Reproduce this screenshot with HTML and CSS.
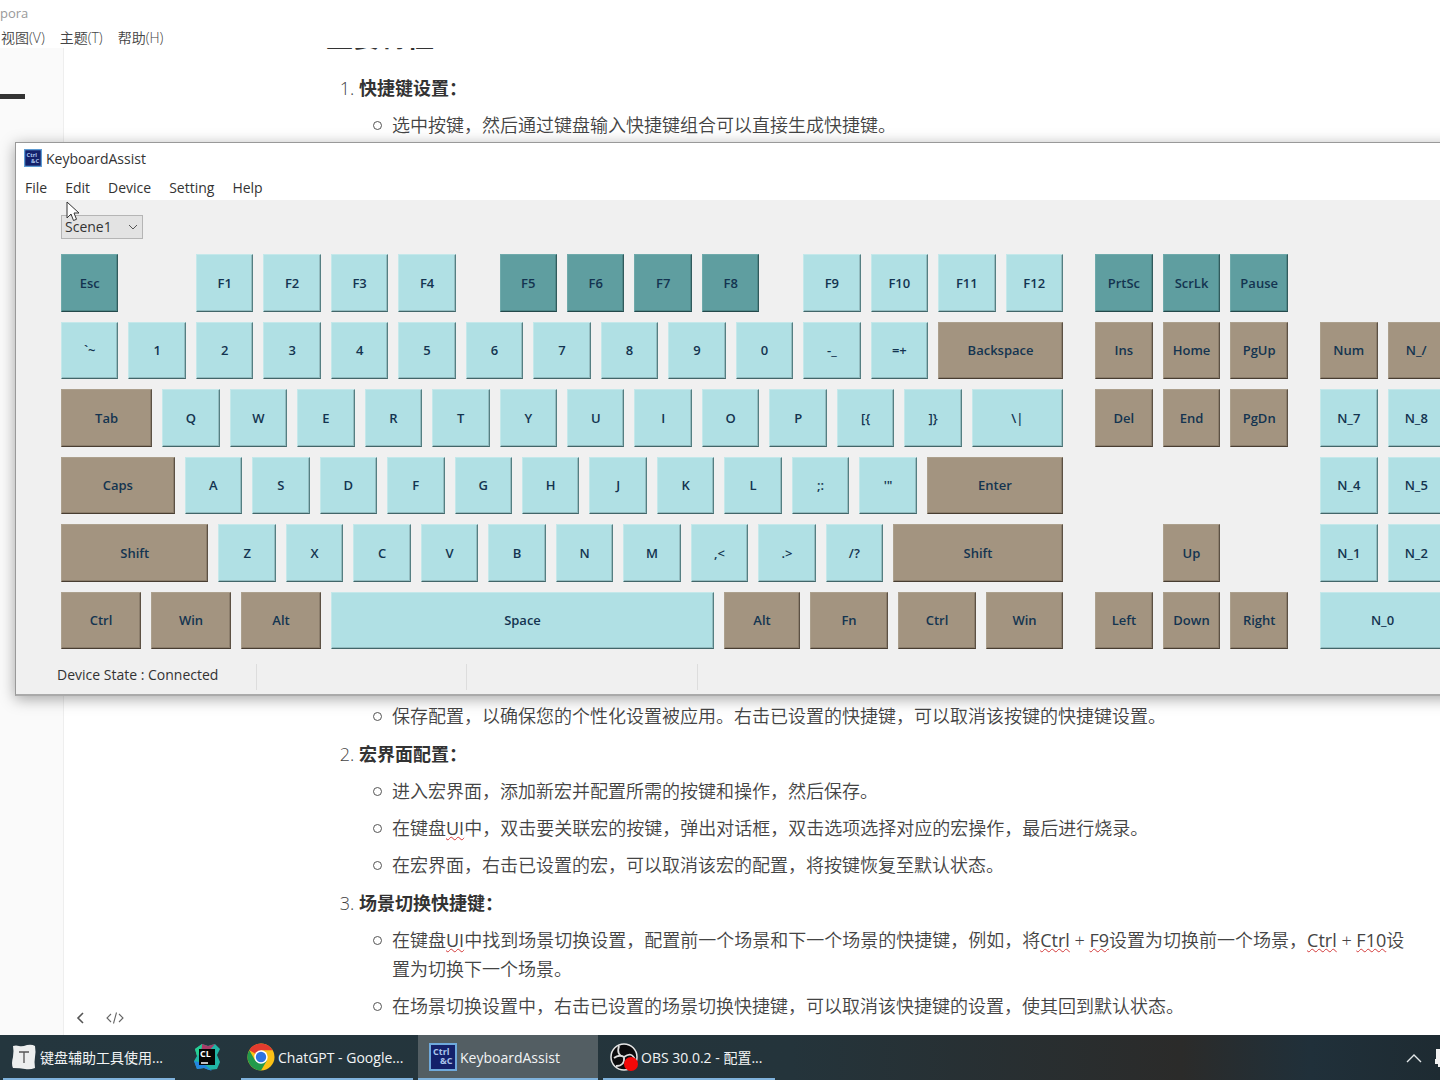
FILE: index.html
```html
<!DOCTYPE html>
<html lang="zh-CN">
<head>
<meta charset="utf-8">
<title>KeyboardAssist</title>
<link rel="stylesheet" href="styles.css">
</head>
<body>
<div class="desktop">
  <header class="editor-head">
    <div class="editor-title">pora</div>
    <nav class="editor-menu">
      <button type="button">视图(V)</button>
      <button type="button">主题(T)</button>
      <button type="button">帮助(H)</button>
    </nav>
  </header>
  <div class="editor-body">
    <aside class="sidebar"><div class="sidebar-tab"></div></aside>
    <main class="doc">
      <h2>重要特性</h2>
      <ol class="sections">
        <li><strong>快捷键设置：</strong>
          <ul>
            <li>选中按键，然后通过键盘输入快捷键组合可以直接生成快捷键。</li>
            <li class="after-window">保存配置，以确保您的个性化设置被应用。右击已设置的快捷键，可以取消该按键的快捷键设置。</li>
          </ul>
        </li>
        <li><strong>宏界面配置：</strong>
          <ul>
            <li>进入宏界面，添加新宏并配置所需的按键和操作，然后保存。</li>
            <li>在键盘<span class="typo">UI</span>中，双击要关联宏的按键，弹出对话框，双击选项选择对应的宏操作，最后进行烧录。</li>
            <li>在宏界面，右击已设置的宏，可以取消该宏的配置，将按键恢复至默认状态。</li>
          </ul>
        </li>
        <li><strong>场景切换快捷键：</strong>
          <ul>
            <li>在键盘<span class="typo">UI</span>中找到场景切换设置，配置前一个场景和下一个场景的快捷键，例如，将<span class="typo">Ctrl</span> + <span class="typo">F9</span>设置为切换前一个场景，<span class="typo">Ctrl</span> + <span class="typo">F10</span>设置为切换下一个场景。</li>
            <li>在场景切换设置中，右击已设置的场景切换快捷键，可以取消该快捷键的设置，使其回到默认状态。</li>
          </ul>
        </li>
      </ol>
    </main>
    <div class="doc-tools">
      <button type="button" aria-label="Back"><svg width="10" height="14" viewBox="0 0 10 14"><path d="M8 2 3 7l5 5" fill="none" stroke="#555" stroke-width="1.6"/></svg></button>
      <button type="button" aria-label="Source"><svg width="18" height="14" viewBox="0 0 18 14"><path d="M5 3 1 7l4 4M13 3l4 4-4 4M10.500 1.500l-3 11" fill="none" stroke="#666" stroke-width="1.100"/></svg></button>
    </div>
  </div>

  <section class="window">
    <div class="window-title">
      <svg width="18" height="18" viewBox="0 0 28 28"><rect x="1" y="1" width="26" height="26" fill="#14216b" stroke="#5d9bd3" stroke-width="2"/><text x="4" y="12" class="logo-text">Ctrl</text><text x="11" y="22" class="logo-text">&amp;C</text></svg>
      <span>KeyboardAssist</span>
    </div>
    <nav class="window-menu">
      <button type="button">File</button>
      <button type="button">Edit</button>
      <button type="button">Device</button>
      <button type="button">Setting</button>
      <button type="button">Help</button>
    </nav>
    <div class="window-body">
      <div class="scene">
        <select aria-label="Scene"><option>Scene1</option></select>
        <svg class="scene-arrow" width="10" height="6" viewBox="0 0 10 6"><path d="M1 1l4 4 4-4" fill="none" stroke="#555"/></svg>
      </div>
      <div class="keyboard">
        <div class="block main-block">
          <div class="row row-fn">
            <button class="key teal">Esc</button><i></i>
            <button class="key">F1</button><button class="key">F2</button><button class="key">F3</button><button class="key">F4</button><i></i>
            <button class="key teal">F5</button><button class="key teal">F6</button><button class="key teal">F7</button><button class="key teal">F8</button><i></i>
            <button class="key">F9</button><button class="key">F10</button><button class="key">F11</button><button class="key">F12</button>
          </div>
          <div class="row row-num">
            <button class="key">`~</button><button class="key">1</button><button class="key">2</button><button class="key">3</button><button class="key">4</button><button class="key">5</button><button class="key">6</button><button class="key">7</button><button class="key">8</button><button class="key">9</button><button class="key">0</button><button class="key">-_</button><button class="key">=+</button><button class="key brown">Backspace</button>
          </div>
          <div class="row row-q">
            <button class="key brown">Tab</button><button class="key">Q</button><button class="key">W</button><button class="key">E</button><button class="key">R</button><button class="key">T</button><button class="key">Y</button><button class="key">U</button><button class="key">I</button><button class="key">O</button><button class="key">P</button><button class="key">[{</button><button class="key">]}</button><button class="key">\|</button>
          </div>
          <div class="row row-a">
            <button class="key brown">Caps</button><button class="key">A</button><button class="key">S</button><button class="key">D</button><button class="key">F</button><button class="key">G</button><button class="key">H</button><button class="key">J</button><button class="key">K</button><button class="key">L</button><button class="key">;:</button><button class="key">'"</button><button class="key brown">Enter</button>
          </div>
          <div class="row row-z">
            <button class="key brown">Shift</button><button class="key">Z</button><button class="key">X</button><button class="key">C</button><button class="key">V</button><button class="key">B</button><button class="key">N</button><button class="key">M</button><button class="key">,&lt;</button><button class="key">.&gt;</button><button class="key">/?</button><button class="key brown">Shift</button>
          </div>
          <div class="row row-space">
            <button class="key brown">Ctrl</button><button class="key brown">Win</button><button class="key brown">Alt</button><button class="key">Space</button><button class="key brown">Alt</button><button class="key brown">Fn</button><button class="key brown">Ctrl</button><button class="key brown">Win</button>
          </div>
        </div>
        <div class="block nav-block">
          <div class="row"><button class="key teal">PrtSc</button><button class="key teal">ScrLk</button><button class="key teal">Pause</button></div>
          <div class="row"><button class="key brown">Ins</button><button class="key brown">Home</button><button class="key brown">PgUp</button></div>
          <div class="row"><button class="key brown">Del</button><button class="key brown">End</button><button class="key brown">PgDn</button></div>
          <div class="row"></div>
          <div class="row"><i></i><button class="key brown">Up</button></div>
          <div class="row"><button class="key brown">Left</button><button class="key brown">Down</button><button class="key brown">Right</button></div>
        </div>
        <div class="block pad-block">
          <div class="row"></div>
          <div class="row"><button class="key brown">Num</button><button class="key brown">N_/</button></div>
          <div class="row"><button class="key">N_7</button><button class="key">N_8</button></div>
          <div class="row"><button class="key">N_4</button><button class="key">N_5</button></div>
          <div class="row"><button class="key">N_1</button><button class="key">N_2</button></div>
          <div class="row"><button class="key wide">N_0</button></div>
        </div>
      </div>
      <div class="status">
        <span class="status-main">Device State : Connected</span>
        <span class="status-cell"></span>
        <span class="status-cell status-cell-wide"></span>
      </div>
    </div>
  </section>

  <svg class="cursor" width="14" height="21" viewBox="0 0 14 21"><path d="M1 1v16l4-4 2.500 6.500 3-1.200L8 12h5z" fill="#fff" stroke="#333" stroke-width="1"/></svg>

  <footer class="taskbar">
    <button type="button" class="task task-doc open">
      <svg width="26" height="26" viewBox="0 0 26 26"><path d="M2 2q3-1 6 0t8-1q5-1 8 1 1 6 0 11t0 11q-5 2-10 1T2 24Q0 20 2 13 3 7 2 2z" fill="#eceeee"/><path d="M8 8h10M13 8v11" stroke="#555" stroke-width="1.300" fill="none"/></svg>
      <span>键盘辅助工具使用...</span>
    </button>
    <button type="button" class="task task-cl" aria-label="CLion">
      <svg width="28" height="28" viewBox="0 0 28 28"><path d="M2 6 9 1l6 2 7-2 5 5-3 6 3 7-3 7-8 1-5-2-7 1-3-8 3-5z" fill="#21b5a5"/><path d="m9 1 6 2 7-2-6 7H8z" fill="#a93b68"/><path d="m1 18 9 2 9 8-8-3-7 1z" fill="#2485df"/><path d="M2 6 9 1 8 10 4 13z" fill="#27ce93"/><rect x="6" y="6" width="16" height="16" fill="#050505"/><text x="7" y="14" class="cl-text">CL</text><path d="M8 20h7" stroke="#fff" stroke-width="1.500"/></svg>
    </button>
    <button type="button" class="task task-chrome open">
      <svg width="28" height="28" viewBox="0 0 28 28"><circle cx="14" cy="14" r="13.500" fill="#fbc116"/><path d="M14 14 2.300 7.250A13.500 13.500 0 0 1 25.700 7.250H14z" fill="#e33b2e"/><path d="M2.300 7.250A13.500 13.500 0 0 0 14 27.500l5.900-10.100L14 14 8.200 17.400z" fill="#229a4b"/><circle cx="14" cy="14" r="6.700" fill="#fff"/><circle cx="14" cy="14" r="5.200" fill="#2f73e0"/></svg>
      <span>ChatGPT - Google...</span>
    </button>
    <button type="button" class="task task-ka open active">
      <svg width="28" height="28" viewBox="0 0 28 28"><rect x="1" y="1" width="26" height="26" fill="#14216b" stroke="#6fa9dc" stroke-width="2"/><text x="4" y="12" class="logo-text">Ctrl</text><text x="11" y="21" class="logo-text">&amp;C</text></svg>
      <span>KeyboardAssist</span>
    </button>
    <button type="button" class="task task-obs open">
      <svg width="28" height="28" viewBox="0 0 28 28"><circle cx="14" cy="14" r="13" fill="#0b0b0d" stroke="#e6e6e6" stroke-width="1.500"/><path d="M9 3q-3 9 5 11 8-6 11 3M14 14q1 9-8 9M14 14q-5-3-10 1" fill="none" stroke="#dcdcdc" stroke-width="1.800"/><circle cx="21" cy="21" r="7" fill="#f40808"/></svg>
      <span>OBS 30.0.2 - 配置...</span>
    </button>
    <div class="tray">
      <svg width="16" height="10" viewBox="0 0 16 10"><path d="m1 9 7-7 7 7" fill="none" stroke="#e4e8ea" stroke-width="1.400"/></svg>
      <svg width="6" height="20" viewBox="0 0 6 20"><path d="M2 1h4v18H4v-3H1v-5h1z" fill="#f2f2f2"/></svg>
    </div>
  </footer>
</div>
</body>
</html>
```
FILE: styles.css
```css
*, *::before { box-sizing: border-box; }
body {
  margin: 0;
  font-family: "Open Sans", "Noto Sans CJK SC", sans-serif;
  color: #333;
  background: #fff;
}
button {
  font: inherit;
  color: inherit;
  background: none;
  border: 0;
  padding: 0;
  white-space: nowrap;
}
svg { display: block; flex: none; }

.desktop {
  position: relative;
  display: flex;
  flex-direction: column;
  height: 100vh;
  overflow: hidden;
}

/* Editor behind the window */
.editor-head { flex: none; font-size: 14px; height: 48px; }
.editor-title { height: 28px; line-height: 26px; font-size: 13px; color: #999; }
.editor-menu { display: flex; gap: 15px; padding-left: 1px; line-height: 20px; color: #444; font-weight: 350; }
.editor-body { position: relative; display: flex; flex: 1; min-height: 0; }
.sidebar {
  flex: none;
  width: 64px;
  padding-top: 46px;
  background: #fafafa;
  border-right: 1px solid #eee;
}
.sidebar-tab { width: 25px; height: 5px; background: #333; }
.doc {
  flex: 1;
  min-width: 0;
  overflow: hidden;
  padding: 0 30px 0 262px;
  font-size: 18px;
  line-height: 29px;
  font-weight: 350;
  color: #444;
}
.doc h2 { margin: -30px 0 19px; font-size: 27px; line-height: 37px; font-weight: 700; color: #333; }
.doc ol, .doc ul { margin: 0; padding-left: 33px; }
.doc strong { font-weight: 700; color: #333; }
.doc ul { margin-top: 8px; list-style: none; }
.doc ul > li::before {
  content: "";
  float: left;
  width: 9px;
  height: 9px;
  margin: 10px 0 0 -19px;
  border: 1px solid #555;
  border-radius: 50%;
}
.sections > li + li { margin-top: 9px; }
.doc ul > li + li { margin-top: 8px; }
.doc ul > .after-window { margin-top: 562px; }
.typo { font-weight: 400; text-decoration: underline wavy #d33a3a 1px; text-underline-offset: 1px; }
.doc-tools {
  position: absolute;
  left: 75px;
  bottom: 10px;
  display: flex;
  gap: 21px;
}

/* Application window */
.window {
  position: absolute;
  left: 15px;
  right: -200px;
  top: 142px;
  background: #f0f0f0;
  border: 1px solid #999;
  border-bottom: 2px solid #aaa;
  box-shadow: 0 3px 14px rgba(0, 0, 0, .35);
  font-size: 14px;
}
.window-title {
  display: flex;
  align-items: center;
  gap: 4px;
  height: 30px;
  padding-left: 8px;
  background: #fff;
}
.window-menu {
  display: flex;
  gap: 18px;
  height: 27px;
  padding: 1px 9px 0;
  background: #fff;
}
.window-body { padding: 15px 0 0 45px; }
.scene { position: relative; width: 82px; height: 24px; }
.scene select {
  appearance: none;
  width: 100%;
  height: 100%;
  padding: 0 3px 2px;
  font: inherit;
  color: #333;
  background: #e3e3e3;
  border: 1px solid #b5b5b5;
  border-radius: 0;
}
.scene-arrow { position: absolute; right: 5px; top: 9px; pointer-events: none; }

.keyboard { display: flex; margin-top: 15px; height: 405px; }
.block { display: grid; grid-template-rows: repeat(6, 1fr); flex: none; }
.main-block { width: 1012px; margin-right: 22px; }
.nav-block { width: 203px; margin-right: 22px; }
.pad-block { width: 135px; }
.row { display: grid; min-width: 0; }
.row-fn { grid-template-columns: repeat(6, 2fr) 1fr repeat(4, 2fr) 1fr repeat(4, 2fr); }
.row-num { grid-template-columns: repeat(13, 1fr) 2fr; }
.row-q { grid-template-columns: 3fr repeat(12, 2fr) 3fr; }
.row-a { grid-template-columns: 11fr repeat(11, 6fr) 13fr; }
.row-z { grid-template-columns: 7fr repeat(10, 3fr) 8fr; }
.row-space { grid-template-columns: repeat(3, 90fr) 393fr 86fr 88fr 88fr 87fr; }
.nav-block .row { grid-template-columns: repeat(3, 1fr); }
.pad-block .row { grid-template-columns: repeat(2, 1fr); }
.key {
  min-width: 0;
  margin: 0 10px 10px 0;
  font-size: 13px;
  font-weight: 600;
  color: #143450;
  background: #b0e0e4;
  border: 1px solid;
  border-color: #c4e8ea #557f82 #426669 #c4e8ea;
  box-shadow: inset -1px -1px #93bcc0;
}
.key.teal { background: #5f9ea0; border-color: #6faaab #315b5d #24494b #6faaab; box-shadow: inset -1px -1px #508889; }
.key.brown { background: #a39480; border-color: #aca08d #5c5144 #483d31 #aca08d; box-shadow: inset -1px -1px #8c7e6c; }
.key.wide { grid-column: span 2; }

.status { display: flex; align-items: center; height: 35px; margin-left: -4px; }
.status-main { width: 199px; padding-bottom: 4px; }
.status-cell { width: 210px; height: 26px; border-left: 1px solid #ddd; }
.status-cell-wide { width: 232px; border-right: 1px solid #ddd; }

.cursor { position: absolute; left: 66px; top: 201px; }
.logo-text { font: 700 9px "Open Sans", sans-serif; fill: #a9c4ec; }
.cl-text { font: 700 9px "Open Sans", sans-serif; fill: #fff; }

/* Taskbar */
.taskbar {
  position: relative;
  display: flex;
  flex: none;
  height: 45px;
  color: #f2f4f5;
  font-size: 14px;
  background: linear-gradient(90deg, #24363e 0%, #24343b 55%, #2b2b2a 82%, #20303a 91%, #1e2b32 100%);
}
.task {
  display: flex;
  align-items: center;
  gap: 3px;
  padding-top: 1px;
  border-bottom: 2px solid transparent;
}
.task.open { border-color: #7fb2dc; }
.task.active { background: #535e63; }
.task-doc { width: 172px; margin-left: 3px; padding-left: 8px; }
.task-cl { width: 66px; padding-left: 18px; }
.task-chrome { width: 172px; padding-left: 6px; }
.task-ka { width: 180px; margin: 0 5px; padding-left: 11px; }
.task-obs { width: 172px; padding-left: 7px; }
.tray { display: flex; align-items: center; gap: 12px; margin-left: auto; }
```
